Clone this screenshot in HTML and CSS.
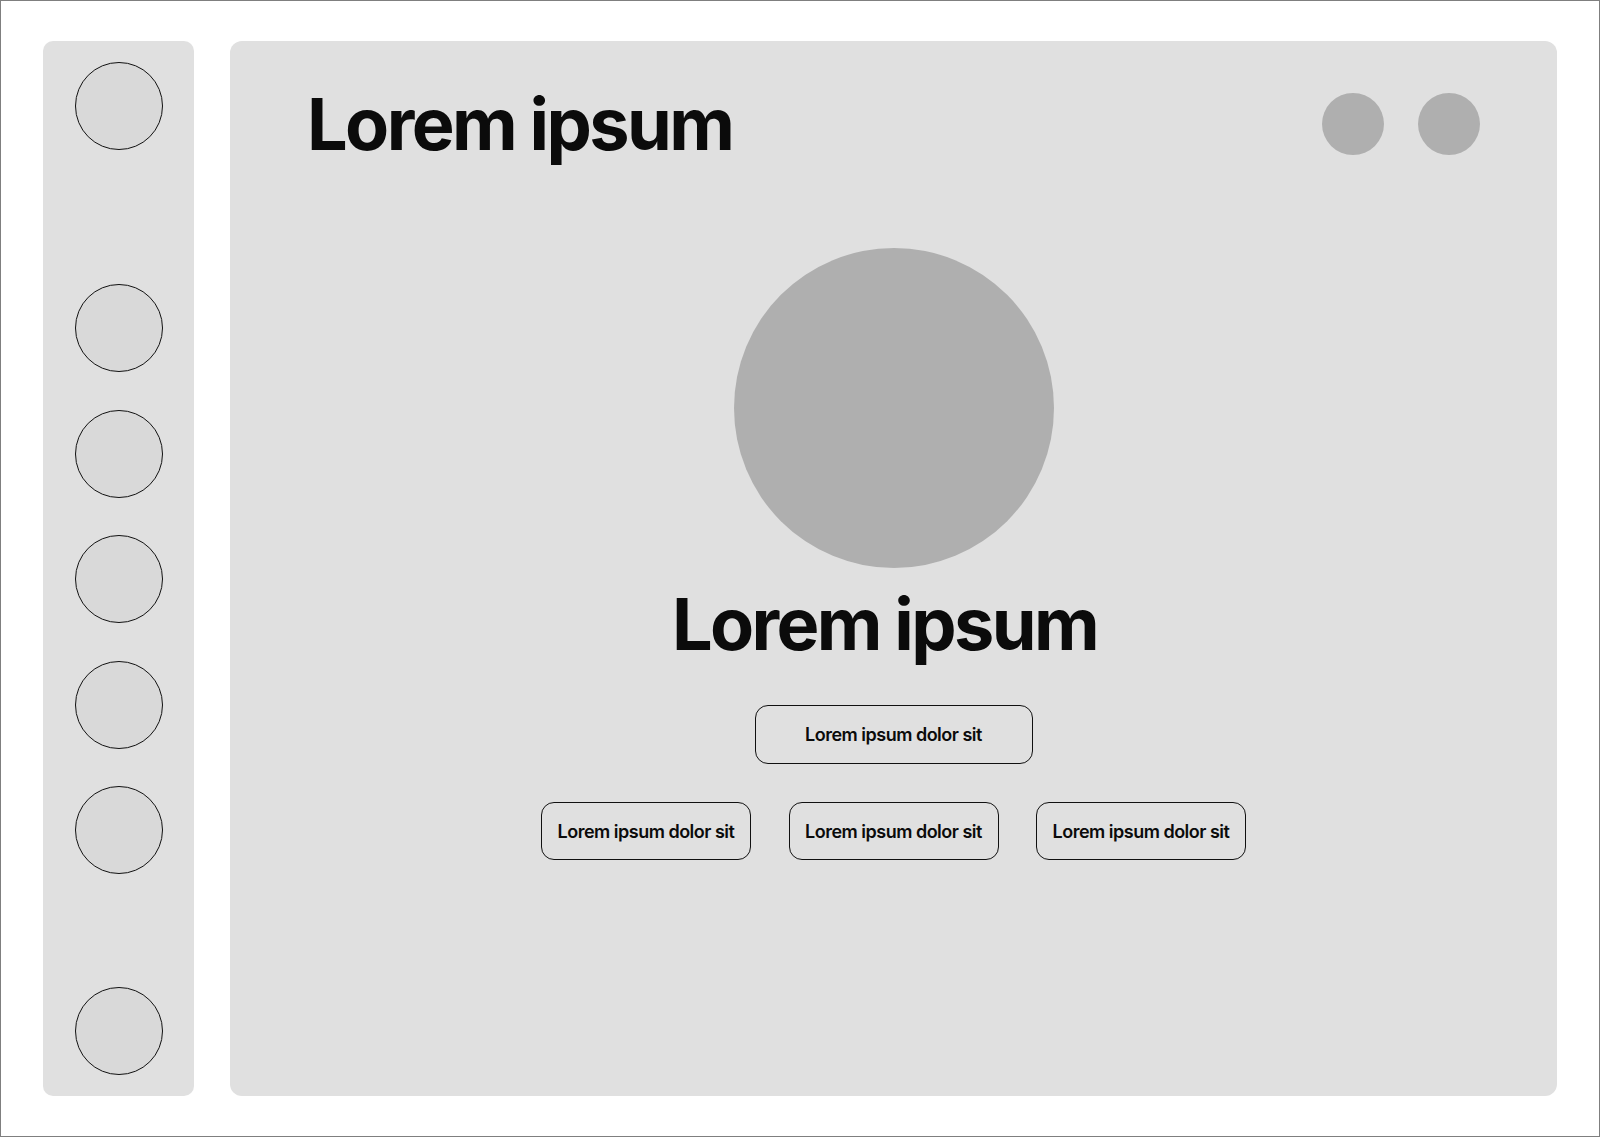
FILE: index.html
```html
<!DOCTYPE html>
<html lang="en">
<head>
<meta charset="utf-8">
<title>Lorem ipsum</title>
<link rel="stylesheet" href="styles.css">
</head>
<body>
<div class="frame">
  <nav class="sidebar">
    <div class="nav-dot"></div>
    <div class="nav-group">
      <div class="nav-dot"></div>
      <div class="nav-dot"></div>
      <div class="nav-dot"></div>
      <div class="nav-dot"></div>
      <div class="nav-dot"></div>
    </div>
    <div class="nav-dot nav-bottom"></div>
  </nav>
  <main class="main">
    <header class="header">
      <h1 class="title">Lorem ipsum</h1>
      <div class="header-actions">
        <span class="action-dot"></span>
        <span class="action-dot"></span>
      </div>
    </header>
    <div class="avatar"></div>
    <h2 class="name">Lorem ipsum</h2>
    <button class="btn btn-wide">Lorem ipsum dolor sit</button>
    <div class="btn-row">
      <button class="btn">Lorem ipsum dolor sit</button>
      <button class="btn">Lorem ipsum dolor sit</button>
      <button class="btn">Lorem ipsum dolor sit</button>
    </div>
  </main>
</div>
</body>
</html>
```
FILE: styles.css
```css
* { box-sizing: border-box; }
html, body { margin: 0; padding: 0; background: #fff; }
body { font-family: Inter, "Noto Sans", sans-serif; color: #0b0b0b; }

.frame {
  width: 1600px;
  height: 1137px;
  border: 1px solid #7f7f7f;
  padding: 40px 42px 40px 42px;
  display: flex;
  gap: 36px;
}

.sidebar {
  width: 151px;
  flex: none;
  background: #e0e0e0;
  border-radius: 10px;
  padding: 21px 0;
  display: flex;
  flex-direction: column;
  align-items: center;
}
.nav-dot {
  width: 88px;
  height: 88px;
  border-radius: 50%;
  border: 1px solid #111;
  background: #d9d9d9;
  flex: none;
}
.nav-group {
  margin-top: 134px;
  display: flex;
  flex-direction: column;
  gap: 37.5px;
}
.nav-bottom { margin-top: auto; }

.main {
  flex: 1;
  background: #e0e0e0;
  border-radius: 12px;
  padding: 52px 77px 0 77px;
  display: flex;
  flex-direction: column;
  align-items: center;
}
.header {
  width: 100%;
  display: flex;
  justify-content: space-between;
  align-items: center;
  height: 62px;
}
.title {
  margin: 0;
  font-size: 72px;
  font-weight: 700;
  letter-spacing: -2.6px;
  line-height: 1;
}
.header-actions { display: flex; gap: 34px; }
.action-dot {
  width: 62px;
  height: 62px;
  border-radius: 50%;
  background: #afafaf;
}
.avatar {
  margin-top: 93px;
  width: 320px;
  height: 320px;
  border-radius: 50%;
  background: #afafaf;
}
.name {
  margin: 20px 18px 0 0;
  font-size: 72px;
  font-weight: 700;
  letter-spacing: -2.6px;
  line-height: 1;
}
.btn {
  font-family: inherit;
  font-size: 18px;
  font-weight: 600;
  color: #0b0b0b;
  background: transparent;
  border: 1px solid #111;
  border-radius: 13px;
  height: 58px;
  width: 210px;
  padding: 0;
  letter-spacing: -0.5px;
}
.btn-wide {
  margin-top: 45px;
  width: 278px;
  height: 59px;
}
.btn-row {
  margin-top: 38px;
  display: flex;
  gap: 37.5px;
}
```
